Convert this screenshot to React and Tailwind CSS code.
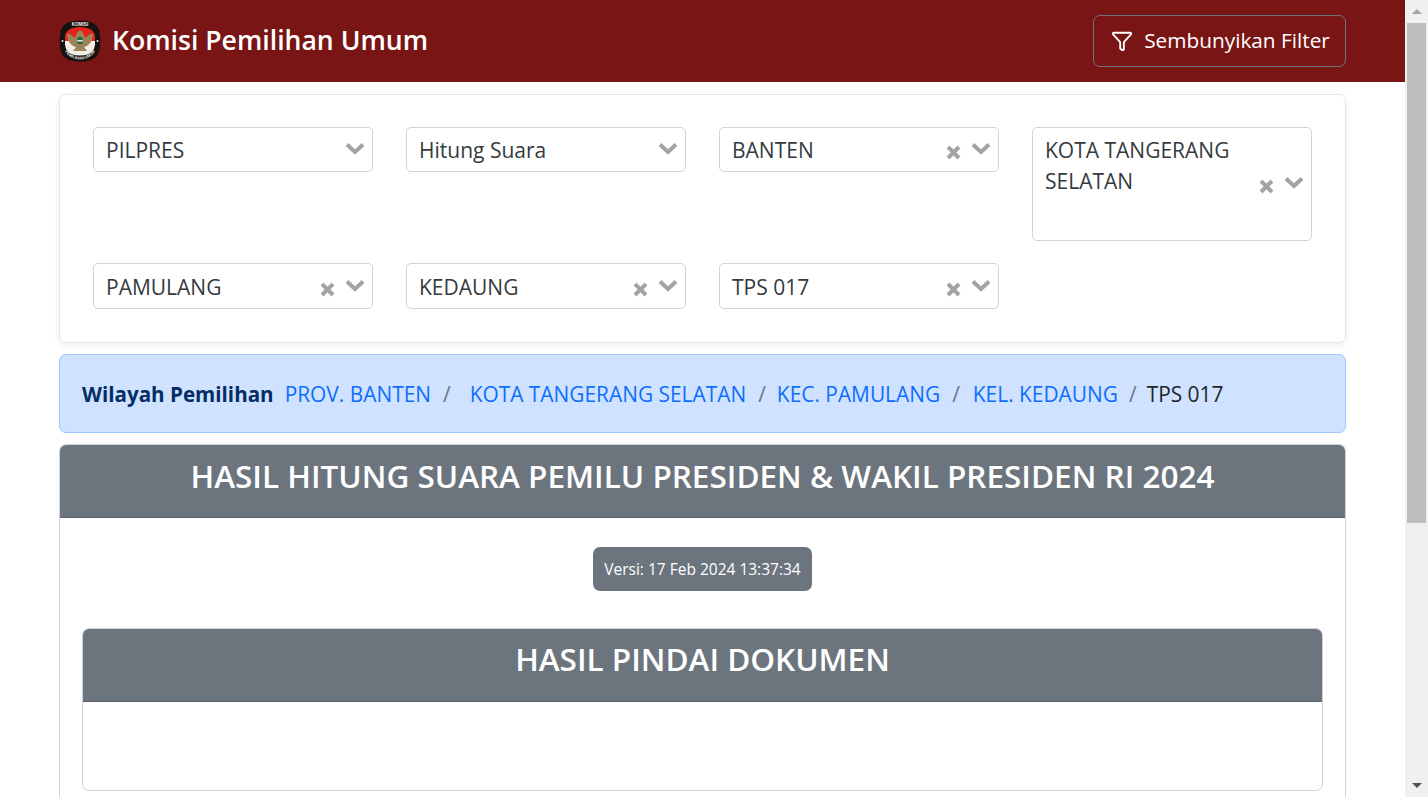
import React from 'react';
import { Filter } from 'lucide-react';

const font = { fontFamily: '"Open Sans", "Noto Sans", sans-serif' };

function KpuLogo() {
  return (
    <svg width="42" height="42" viewBox="0 0 42 42" className="shrink-0">
      <path d="M14 1 Q21 0 28 1 Q40 3 41 15 Q42 21 41 27 Q40 39 28 41 Q21 42 14 41 Q2 39 1 27 Q0 21 1 15 Q2 3 14 1 Z" fill="#17110f" />
      <path d="M6 21 Q5 12 11 9 Q21 5 31 9 Q37 12 36 21 Z" fill="#e0261c" />
      <path d="M6 21 H36 Q37 30 30 34 Q21 37 12 34 Q5 30 6 21 Z" fill="#f1eee8" />
      <path d="M8 14 C11 13 14 17 16 18 L18 13 L21 10 L24 13 L26 18 C28 17 31 13 34 14 C34 21 30 26 25 27 L28 31 H14 L17 27 C12 26 8 21 8 14 Z" fill="#9c8455" />
      <rect x="18.5" y="17" width="5" height="7" fill="#1c6d3d" />
      <rect x="18.5" y="20" width="5" height="1.5" fill="#f1eee8" />
      <circle cx="3.5" cy="21" r="1" fill="#f1eee8" />
      <circle cx="38.5" cy="21" r="1" fill="#f1eee8" />
      <text x="21" y="6.3" textAnchor="middle" fontSize="4.6" fontWeight="700" fill="#f1eee8" fontFamily="Liberation Sans, sans-serif">KOMISI</text>
      <defs>
        <path id="ring-bottom" d="M4 27 Q8 39 21 39.5 Q34 39 38 27" />
      </defs>
      <text fontSize="4" fontWeight="700" fill="#f1eee8" fontFamily="Liberation Sans, sans-serif" textAnchor="middle">
        <textPath href="#ring-bottom" startOffset="50%">PEMILIHAN UMUM</textPath>
      </text>
    </svg>
  );
}

function Cross() {
  return (
    <svg width="15" height="15" viewBox="0 0 15 15" className="shrink-0">
      <path d="M2 2 L13 13 M13 2 L2 13" stroke="#a3a3a3" strokeWidth="4" />
    </svg>
  );
}

function Chevron() {
  return (
    <svg width="20" height="13" viewBox="0 0 20 13" className="shrink-0">
      <path d="M2 2.5 L10 10 L18 2.5" fill="none" stroke="#a3a3a3" strokeWidth="4" />
    </svg>
  );
}

function SelectBox({ label, clearable = true, tall = false, firstRow = false }) {
  const size = tall ? 'h-[114px] pt-[7px]' : firstRow ? 'h-[45px] pt-[7px]' : 'h-[46px] pt-[8px]';
  const controls = tall ? 'top-[48px]' : firstRow ? 'top-[14px]' : 'top-[15px]';
  return (
    <div className={`relative rounded-[5px] border border-[#ced4da] bg-white pl-[12px] pr-[60px] text-[#343a40] text-[21px] leading-[31px] ${size}`}>
      {label}
      {/* clear and arrow sit on top of the field */}
      <div className={`absolute right-[7px] flex items-start gap-[10px] ${controls}`}>
        {clearable && <div className="mt-[3px]"><Cross /></div>}
        <Chevron />
      </div>
    </div>
  );
}

function CardHeader({ title, inner = false }) {
  return (
    <div className={`h-[73px] flex items-center justify-center bg-[#6c757d] border-b border-[#5b646b] text-white text-[31.5px] font-semibold ${inner ? 'pb-[13px]' : 'pb-[11px]'}`}>
      {title}
    </div>
  );
}

function Scrollbar() {
  return (
    <div className="w-[23px] shrink-0 h-full bg-[#f0f0f0] flex flex-col items-center">
      <div className="h-[23px] w-full flex items-center justify-center">
        <div className="w-0 h-0 border-x-[5px] border-x-transparent border-b-[5px] border-b-[#a3a3a3]" />
      </div>
      <div className="w-[19px] h-[500px] bg-[#bdbdbd]" />
      <div className="flex-1" />
      <div className="h-[23px] w-full flex items-center justify-center">
        <div className="w-0 h-0 border-x-[5px] border-x-transparent border-t-[5px] border-t-[#505050]" />
      </div>
    </div>
  );
}

export default function App() {
  return (
    <div className="h-[797px] w-full flex overflow-hidden bg-white" style={font}>
      <div className="flex-1 min-w-0 h-full overflow-hidden">
        {/* Navigation Top Bar */}
        <header className="h-[82px] bg-[#7a1515] px-[59px] flex items-center justify-between">
          <div className="flex items-center gap-[11px]">
            <KpuLogo />
            <span className="text-white text-[26.6px] font-semibold pb-[1px]">Komisi Pemilihan Umum</span>
          </div>
          <button className="h-[52px] w-[253px] pl-[2px] rounded-[7px] border border-[#6c757d] flex items-center justify-center gap-[11px] text-white text-[20.8px]">
            <Filter size={22} strokeWidth={2} />
            Sembunyikan Filter
          </button>
        </header>

        <main className="mx-[59px] mt-[12px] flex flex-col">
          {/* Filters */}
          <section className="rounded-[7px] border border-[#e4e6e8] shadow-[0_2px_6px_rgba(0,0,0,0.08)] px-[33px] pt-[32px] pb-[33px] grid grid-cols-[280px_280px_280px_280px] gap-x-[33px] gap-y-[22px] items-start">
            <SelectBox label="PILPRES" clearable={false} firstRow />
            <SelectBox label="Hitung Suara" clearable={false} firstRow />
            <SelectBox label="BANTEN" firstRow />
            <SelectBox label="KOTA TANGERANG SELATAN" tall />
            <SelectBox label="PAMULANG" />
            <SelectBox label="KEDAUNG" />
            <SelectBox label="TPS 017" />
          </section>

          {/* Breadcrumb */}
          <div className="mt-[11px] h-[79px] pt-[2px] rounded-[7px] border border-[#9ec5fe] bg-[#cfe2ff] px-[22px] flex items-center text-[20.9px] whitespace-nowrap">
            <span className="font-bold text-[20.6px] text-[#052c65]">Wilayah Pemilihan</span>
            <a className="ml-[11px] text-[#0d6efd]">PROV. BANTEN</a>
            <span className="mx-[12px] text-[#6c757d]">/</span>
            <a className="ml-[7px] text-[#0d6efd]">KOTA TANGERANG SELATAN</a>
            <span className="ml-[12px] mr-[11px] text-[#6c757d]">/</span>
            <a className="text-[#0d6efd]">KEC. PAMULANG</a>
            <span className="ml-[12px] mr-[13px] text-[#6c757d]">/</span>
            <a className="text-[#0d6efd]">KEL. KEDAUNG</a>
            <span className="ml-[11px] mr-[10px] text-[#6c757d]">/</span>
            <span className="text-[#212529]">TPS 017</span>
          </div>

          {/* Main result card */}
          <section className="mt-[11px] rounded-t-[7px] border border-[#ced4da] overflow-hidden h-[400px]">
            <CardHeader title="HASIL HITUNG SUARA PEMILU PRESIDEN & WAKIL PRESIDEN RI 2024" />
            <div className="px-[22px] pt-[29px]">
              <div className="flex justify-center">
                <span className="h-[44px] w-[219px] pt-[2px] justify-center rounded-[7px] bg-[#6c757d] text-white text-[15.5px] flex items-center">
                  Versi: 17 Feb 2024 13:37:34
                </span>
              </div>
              <div className="mt-[37px] rounded-[7px] border border-[#ced4da] overflow-hidden">
                <CardHeader title="HASIL PINDAI DOKUMEN" inner />
                <div className="h-[88px]" />
              </div>
            </div>
          </section>
        </main>
      </div>
      <Scrollbar />
    </div>
  );
}
